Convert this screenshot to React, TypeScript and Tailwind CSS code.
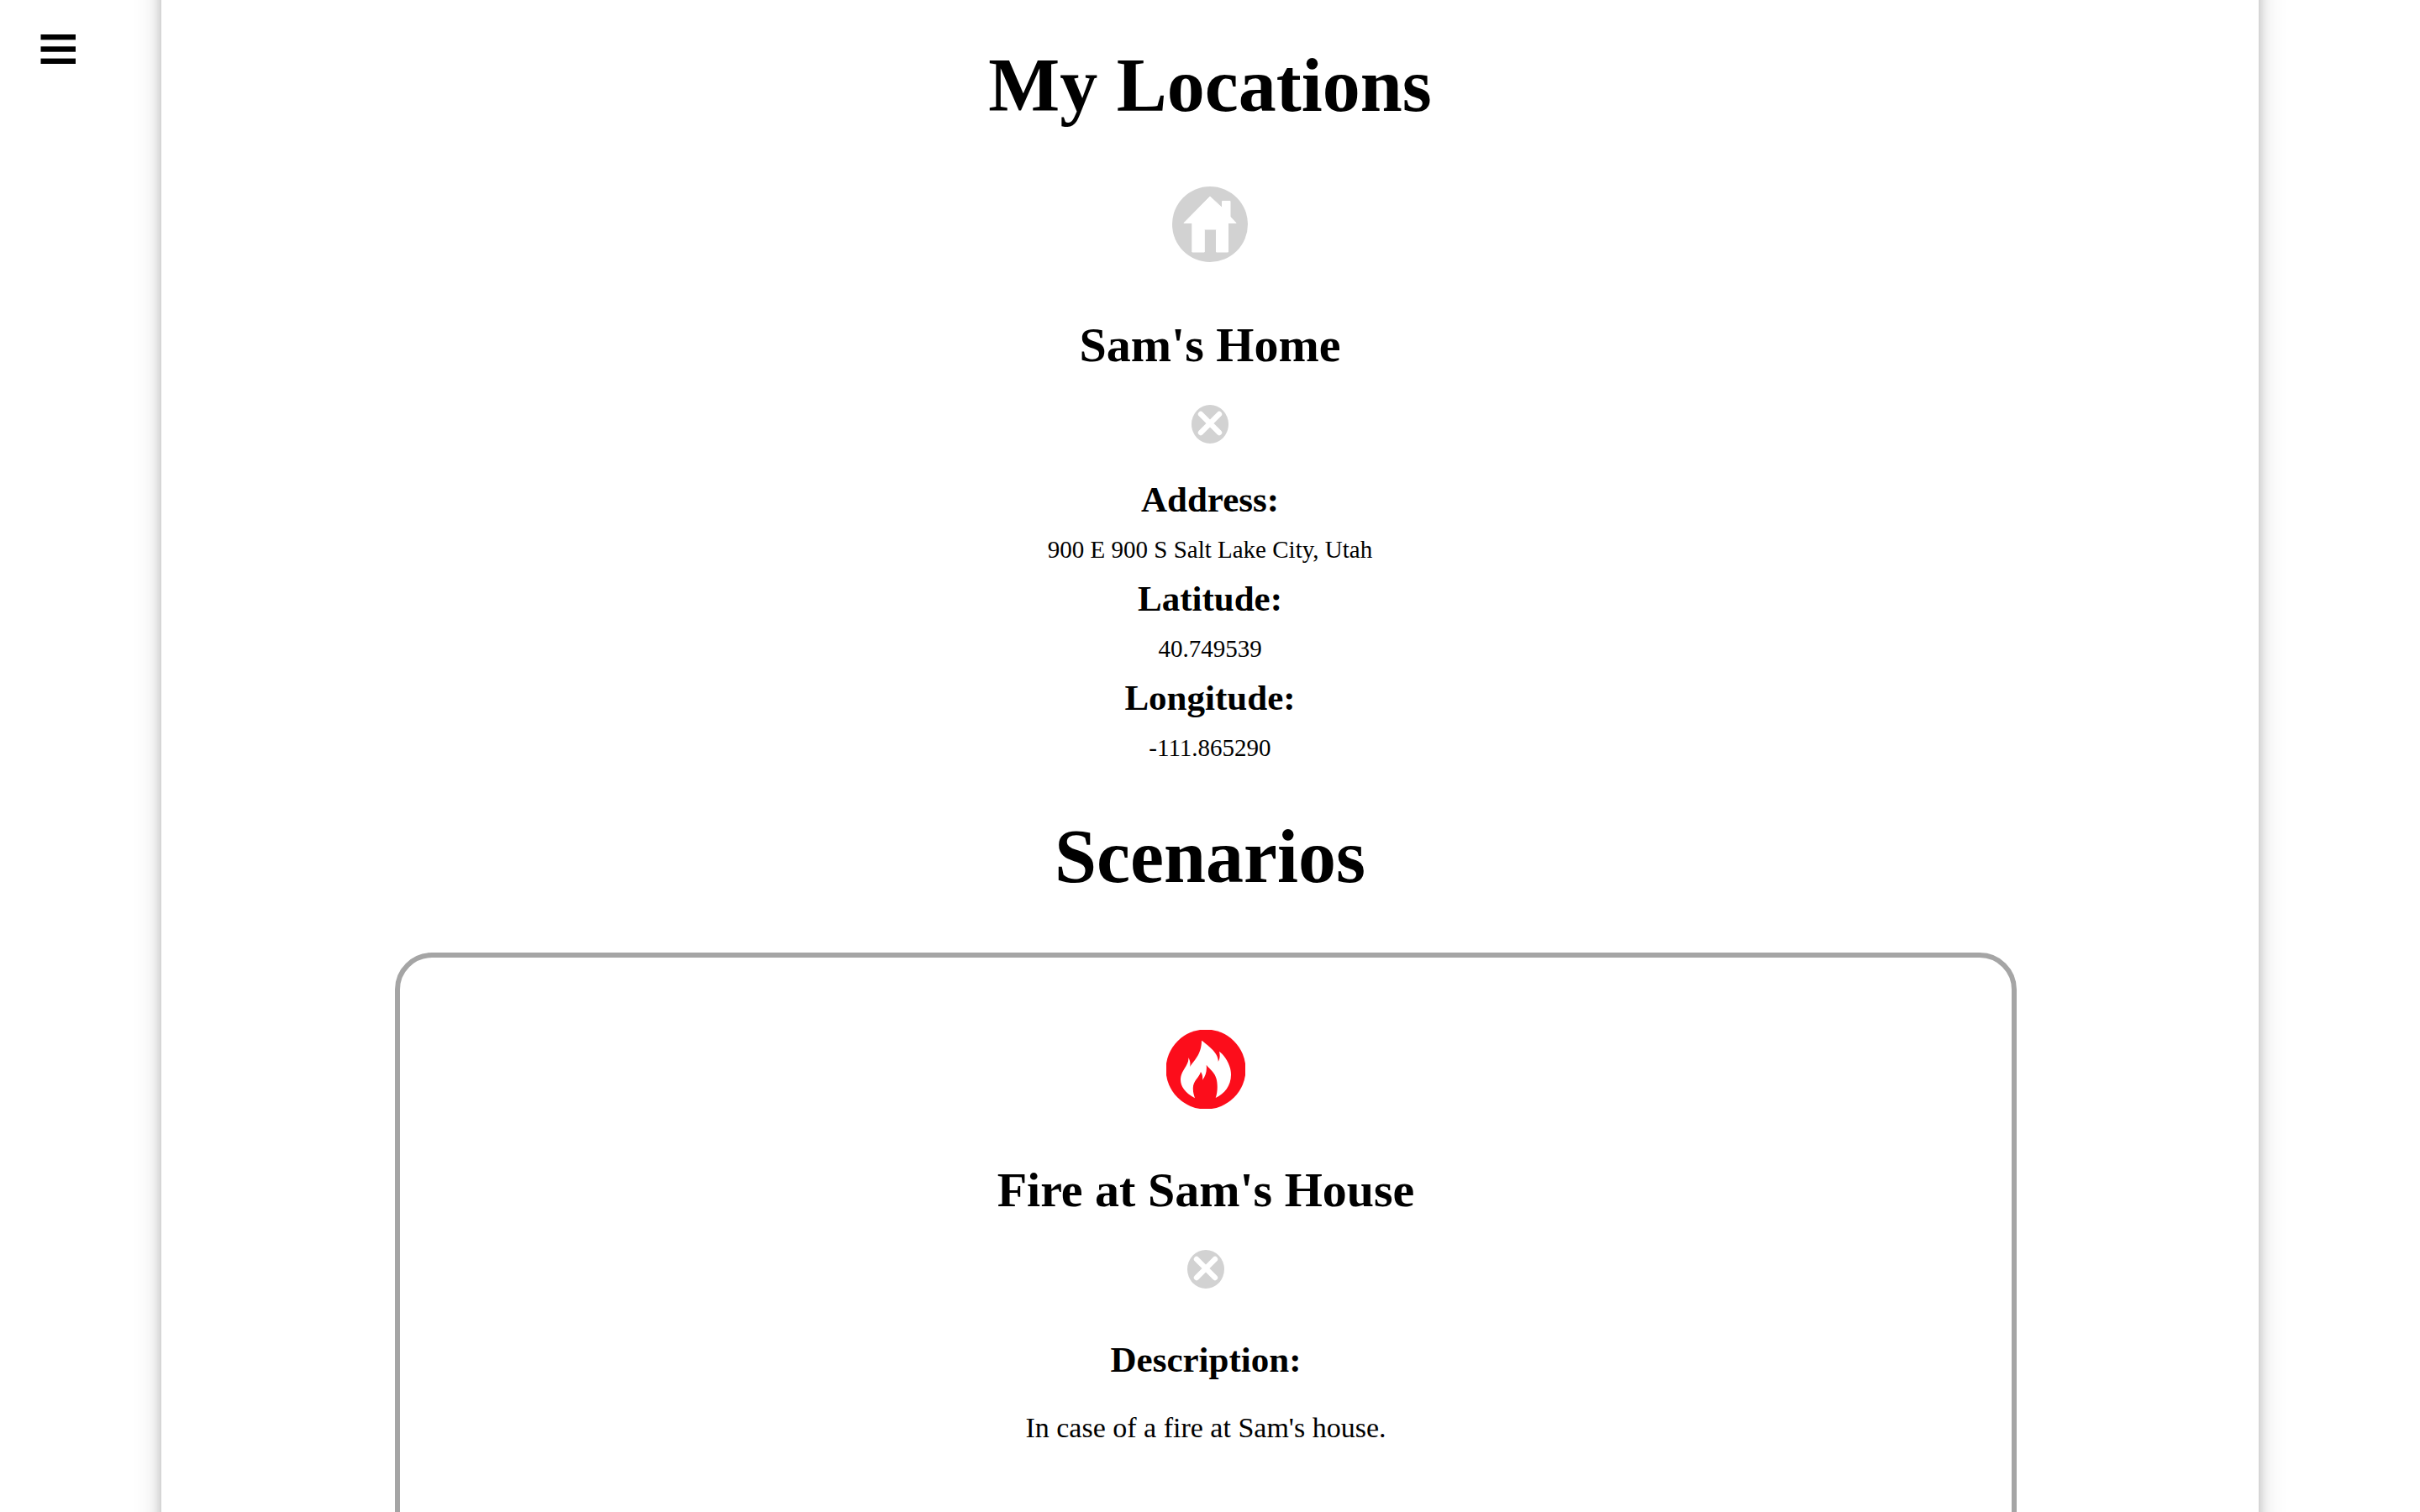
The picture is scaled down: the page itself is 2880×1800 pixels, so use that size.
function MenuIcon() {
  return (
    <svg width="42" height="35" viewBox="0 0 42 35" aria-hidden="true">
      <rect x="0.5" y="0" width="41.5" height="6.4" />
      <rect x="0.5" y="14.3" width="41.5" height="6.4" />
      <rect x="0.5" y="28.6" width="41.5" height="6.4" />
    </svg>
  );
}

function HomeIcon() {
  return (
    <svg width="90" height="90" viewBox="0 0 90 90" aria-hidden="true">
      <circle cx="45" cy="45" r="45" fill="#d2d2d2" />
      <path
        d="M45 12 L59.5 25.5 V17.5 H69 V36 L76 43.5 H66.5 V78 H52.5 V51.5 Q52.5 51 52 51 H38.8 Q38.3 51 38.3 51.5 V78 H23.8 V43.5 H14 Z"
        fill="#fff"
        stroke="#fff"
        strokeWidth="1"
        strokeLinejoin="round"
      />
    </svg>
  );
}

function FireIcon() {
  return (
    <svg width="94" height="94" viewBox="0 0 94 94" aria-hidden="true">
      <circle cx="47" cy="47" r="47.5" fill="#fc0d1b" />
      <path
        d="M42 12.7 C48 17 63 28 61.7 38 C64 34 64 30 63 25.7 C69 30 77 41 77 53.5 C77 67 69 76 58.7 81 C61 75 61.5 65 59.5 58 C57 49.5 51 46.5 47.7 41.7 C48.5 49 47 55 43 59.7 C43.5 56 43 53 41 50 C39 57 31.5 61 31.8 70 C31.8 75 33 78 34 81.3 C22 75 17 67 17 59.5 C17 48 27.5 42 26.3 33 C28.5 37 28.8 40 28.2 44 C32 37 42 30 42 12.7 Z"
        fill="#fff"
      />
    </svg>
  );
}

function DeleteButton({ label }: { label: string }) {
  return (
    <button type="button" aria-label={label} className="mt-[38px] block cursor-pointer">
      <svg width="44" height="46" viewBox="0 0 44 46" aria-hidden="true">
        <ellipse cx="22" cy="23" rx="22" ry="23" fill="#d2d2d2" />
        <path d="M11 11 L33 33 M33 11 L11 33" stroke="#fff" strokeWidth="6.4" strokeLinecap="round" />
      </svg>
    </button>
  );
}

const details = [
  { label: "Address:", value: "900 E 900 S Salt Lake City, Utah" },
  { label: "Latitude:", value: "40.749539" },
  { label: "Longitude:", value: "-111.865290" },
];

export default function App() {
  return (
    <div className="flex min-h-screen overflow-hidden bg-white font-['Liberation_Serif','Times_New_Roman',serif] text-black">
      <nav className="w-48 shrink-0 pt-[41px] pl-12">
        <button type="button" aria-label="Open menu" className="block cursor-pointer">
          <MenuIcon />
        </button>
      </nav>

      <main className="-mt-16 min-w-0 flex-1 bg-white pt-16 shadow-[0_0_12px_rgba(0,0,0,0.2),0_0_32px_rgba(0,0,0,0.17)]">
        <section className="flex flex-col items-center pt-[50px] text-center">
          <h1 className="text-[90px] leading-[104px] font-bold">My Locations</h1>
          <div className="mt-[68px]">
            <HomeIcon />
          </div>
          <h2 className="mt-[66px] text-[58px] leading-[66px] font-bold">Sam's Home</h2>
          <DeleteButton label="Delete Sam's Home" />
          <dl className="mt-[42px] flex flex-col gap-[17px]">
            {details.map(({ label, value }) => (
              <div key={label} className="flex flex-col gap-[17px]">
                <dt className="text-[43px] leading-[50px] font-bold">{label}</dt>
                <dd className="text-[29px] leading-[34px]">{value}</dd>
              </div>
            ))}
          </dl>
        </section>

        <section className="pt-[61px] pb-24 text-center">
          <h1 className="text-[90px] leading-[104px] font-bold">Scenarios</h1>
          <article className="mt-[62px] mr-[288px] ml-[278px] flex flex-col items-center rounded-[44px] border-[6px] border-[#a5a5a5] pt-[86px] pb-40">
            <FireIcon />
            <h2 className="mt-[64px] text-[58px] leading-[66px] font-bold">Fire at Sam's House</h2>
            <DeleteButton label="Delete Fire at Sam's House" />
            <h3 className="mt-[60px] text-[43px] leading-[50px] font-bold">Description:</h3>
            <p className="mt-[36px] text-[34px] leading-[40px]">In case of a fire at Sam's house.</p>
          </article>
        </section>
      </main>

      <div className="w-48 shrink-0" />
    </div>
  );
}
